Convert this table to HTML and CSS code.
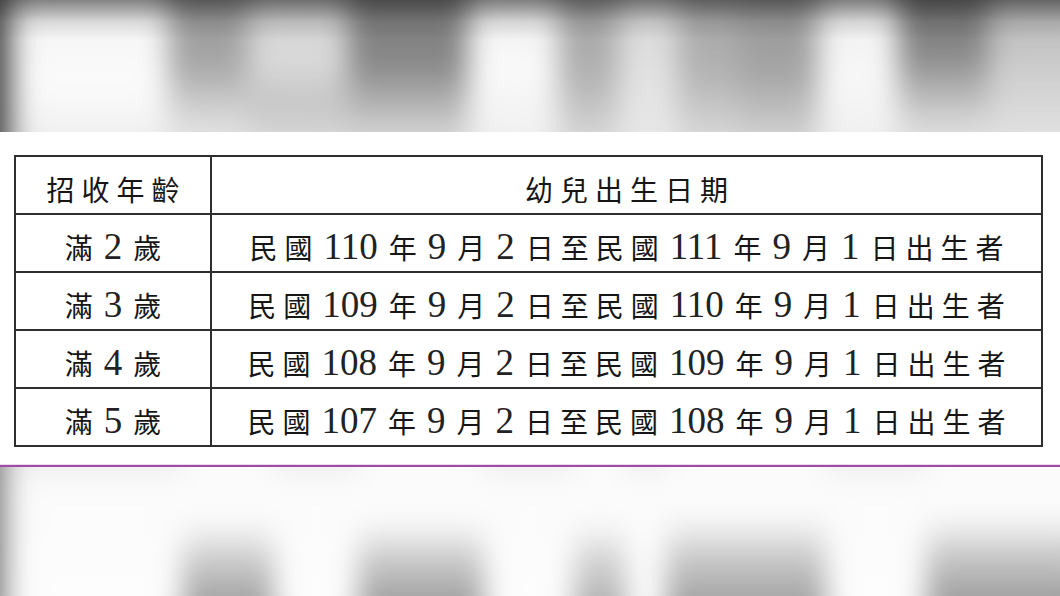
FILE: index.html
```html
<!DOCTYPE html>
<html lang="zh-Hant">
<head>
<meta charset="utf-8">
<title>招收年齡</title>
<link rel="stylesheet" href="styles.css">
</head>
<body>
<div class="page">
  <div class="blur-top">
    <div class="blur-row top-row">
      <div class="b b1"></div><div class="b b2"></div><div class="b b3"></div><div class="b b4"></div>
      <div class="b b5"></div><div class="b b6"></div><div class="b b7"></div><div class="b b8"></div>
      <div class="b b9"></div><div class="b b10"></div><div class="b b11"></div><div class="b b12"></div>
      <div class="b b13"></div><div class="b b14"></div>
    </div>
  </div>
  <div class="doc">
    <table class="age-table">
      <tr>
        <th class="c1">招收年齡</th>
        <th class="c2">幼兒出生日期</th>
      </tr>
      <tr>
        <td class="c1">滿<span class="n">2</span>歲</td>
        <td class="c2">民國<span class="n">110</span>年<span class="n">9</span>月<span class="n">2</span>日至民國<span class="n">111</span>年<span class="n">9</span>月<span class="n">1</span>日出生者</td>
      </tr>
      <tr>
        <td class="c1">滿<span class="n">3</span>歲</td>
        <td class="c2">民國<span class="n">109</span>年<span class="n">9</span>月<span class="n">2</span>日至民國<span class="n">110</span>年<span class="n">9</span>月<span class="n">1</span>日出生者</td>
      </tr>
      <tr>
        <td class="c1">滿<span class="n">4</span>歲</td>
        <td class="c2">民國<span class="n">108</span>年<span class="n">9</span>月<span class="n">2</span>日至民國<span class="n">109</span>年<span class="n">9</span>月<span class="n">1</span>日出生者</td>
      </tr>
      <tr>
        <td class="c1">滿<span class="n">5</span>歲</td>
        <td class="c2">民國<span class="n">107</span>年<span class="n">9</span>月<span class="n">2</span>日至民國<span class="n">108</span>年<span class="n">9</span>月<span class="n">1</span>日出生者</td>
      </tr>
    </table>
  </div>
  <div class="rule"></div>
  <div class="blur-bottom">
    <div class="blur-row bottom-row">
      <div class="s s0"></div>
      <div class="s g1"></div><div class="s k"></div>
      <div class="s g2"></div><div class="s k2"></div>
      <div class="s g3"></div><div class="s k3"></div>
      <div class="s g4"></div><div class="s k4"></div>
      <div class="s g5"></div>
    </div>
  </div>
</div>
</body>
</html>
```

FILE: styles.css
```css
html, body {
  margin: 0;
  padding: 0;
  background: #ffffff;
}

.page {
  width: 1060px;
  height: 596px;
  overflow: hidden;
  display: flex;
  flex-direction: column;
  background: #ffffff;
}

/* blurred photo strips */
.blur-top {
  height: 132px;
  flex: none;
  overflow: hidden;
  position: relative;
  background: #e6e6e6;
}

.blur-top::after {
  content: "";
  position: absolute;
  inset: 0;
  background: linear-gradient(to bottom, rgba(40,40,40,0.55) 0, rgba(60,60,60,0.15) 22px, rgba(0,0,0,0) 40px);
}

.blur-row {
  display: flex;
  margin: -30px -30px;
  filter: blur(14px);
}

.top-row {
  height: 192px;
}

.b { flex: none; height: 100%; }
.b1 { width: 36px; background: #3e3e3e; }
.b2 { width: 12px; background: #bdbdbd; }
.b3 { width: 150px; background: linear-gradient(#f0f0f0, #fbfbfb 60%, #eaeaea); }
.b4 { width: 80px; background: linear-gradient(#8a8a8a, #a8a8a8 50%, #dedede 80%, #e8e8e8); }
.b5 { width: 100px; background: linear-gradient(#bcbcbc, #dcdcdc 45%, #c4c4c4 70%, #e6e6e6); }
.b6 { width: 120px; background: linear-gradient(#6e6e6e, #8a8a8a 50%, #c8c8c8 80%, #e8e8e8); }
.b7 { width: 90px; background: linear-gradient(#e4e4e4, #fafafa 50%, #ececec); }
.b8 { width: 60px; background: linear-gradient(#9a9a9a, #b2b2b2 55%, #e4e4e4); }
.b9 { width: 60px; background: linear-gradient(#cfcfcf, #e2e2e2 55%, #eaeaea); }
.b10 { width: 60px; background: linear-gradient(#9c9c9c, #b4b4b4 55%, #e6e6e6); }
.b11 { width: 80px; background: linear-gradient(#8e8e8e, #a6a6a6 55%, #e2e2e2); }
.b12 { width: 80px; background: linear-gradient(#e8e8e8, #f8f8f8 55%, #ececec); }
.b13 { width: 90px; background: linear-gradient(#5e5e5e, #8c8c8c 45%, #d8d8d8 80%, #e8e8e8); }
.b14 { width: 120px; background: linear-gradient(#a8a8a8, #cfcfcf 55%, #e8e8e8); }

/* document table */
.doc {
  flex: none;
  height: 332px;
  padding: 23px 0 0 14px;
  box-sizing: border-box;
  background: #ffffff;
}

.age-table {
  border-collapse: collapse;
  width: 1029px;
  font-family: "Liberation Serif", "Noto Sans CJK TC", serif;
  font-size: 28px;
  font-weight: 400;
  color: #161616;
  letter-spacing: 7px;
}

.age-table tr {
  height: 58px;
}

.age-table th,
.age-table td {
  border: 2px solid #2e2e2e;
  padding: 14px 0 0 7px;
  text-align: center;
  vertical-align: top;
  font-weight: 400;
  line-height: 42px;
  white-space: nowrap;
  overflow: hidden;
}

.age-table .c1 {
  width: 187px;
}

.n {
  font-size: 37px;
  line-height: 0;
  letter-spacing: 0;
  margin: 0 11px 0 4px;
  color: #222;
}

.rule {
  flex: none;
  height: 3px;
  background: linear-gradient(#f1d8f2 0, #f1d8f2 1px, #9c4fa2 1px, #9c4fa2 3px);
}

.blur-bottom {
  flex: 1;
  overflow: hidden;
  background: #f6f6f6;
}

.bottom-row {
  height: 190px;
  align-items: stretch;
}

.s { flex: none; height: 100%; }
.s0 { width: 42px; background: linear-gradient(to right, #3a3a3a, #8a8a8a 60%, #e0e0e0); }
.g1 { width: 170px; background: linear-gradient(#e2e2e2, #fbfbfb 25%, #fdfdfd); }
.k  { width: 92px; background: linear-gradient(#fbfbfb 45%, #c4c4c4 68%, #8e8e8e 100%); }
.g2 { width: 84px; background: linear-gradient(#e2e2e2, #fbfbfb 25%, #fdfdfd); }
.k2 { width: 126px; background: linear-gradient(#fbfbfb 45%, #c2c2c2 68%, #8c8c8c 100%); }
.g3 { width: 90px; background: linear-gradient(#e2e2e2, #fbfbfb 25%, #fdfdfd); }
.k3 { width: 52px; background: linear-gradient(#fbfbfb 45%, #cdcdcd 68%, #a0a0a0 100%); }
.g4 { width: 40px; background: linear-gradient(#e2e2e2, #fbfbfb 25%, #fdfdfd); }
.k4 { width: 160px; background: linear-gradient(#fbfbfb 42%, #c4c4c4 66%, #909090 100%); }
.g5 { width: 100px; background: linear-gradient(#e2e2e2, #fbfbfb 25%, #fdfdfd); }
.bottom-row::after {
  content: "";
  flex: 1;
  background: linear-gradient(#fbfbfb 42%, #c0c0c0 66%, #8a8a8a 100%);
}
```
